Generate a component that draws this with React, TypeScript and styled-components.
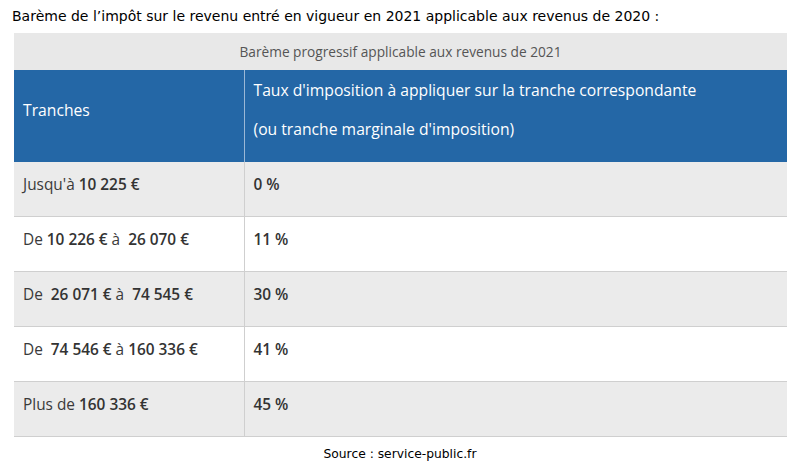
import React from "react";
import styled, { createGlobalStyle } from "styled-components";

const Global = createGlobalStyle`
  html, body { margin: 0; padding: 0; background: #ffffff; }
  body { width: 806px; height: 462px; overflow: hidden; }
`;

const Page = styled.div`
  padding: 6px 18px 0 12px;
  font-family: "DejaVu Sans", Verdana, sans-serif;
  color: #000;
`;

const Intro = styled.p`
  margin: 0;
  font-size: 14px;
  line-height: 20px;
`;

const Table = styled.table`
  margin: 7px 0 0 2px;
  width: 773px;
  table-layout: fixed;
  border-collapse: collapse;
  font-family: "Open Sans", sans-serif;
  color: #3a3a3a;
`;

const Col = styled.col<{ $w?: number }>`
  width: ${(p) => (p.$w ? `${p.$w}px` : "auto")};
`;

const Caption = styled.caption`
  background: #e8e8e8;
  color: #555;
  font-size: 13.7px;
  height: 37px;
  line-height: 37px;
`;

const HeadCell = styled.th`
  background: #2467a6;
  color: #fff;
  font-weight: 400;
  text-align: left;
  font-size: 15.7px;
  padding: 0 9px 12px;
  height: 80px;
  vertical-align: middle;
  & + & { border-left: 1px solid #9bb8d6; }
`;

const HeadLine = styled.div`
  line-height: 39px;
  white-space: nowrap;
`;

const Row = styled.tr<{ $shade: boolean }>`
  background: ${(p) => (p.$shade ? "#ebebeb" : "#ffffff")};
  border-bottom: 1px solid #cfcfcf;
`;

const Cell = styled.td`
  height: 45px;
  padding: 0 9px 9px;
  font-size: 15.4px;
  vertical-align: middle;
  white-space: nowrap;
  & + & { border-left: 1px solid #cfcfcf; }
  b { font-weight: 600; color: #333; }
`;

const Source = styled.p`
  margin: 7px 0 0;
  text-align: center;
  font-size: 12.3px;
  line-height: 20px;
`;

const rows: { label: React.ReactNode; rate: string }[] = [
  { label: <>Jusqu'à <b>10 225 €</b></>, rate: "0 %" },
  { label: <>De <b>10 226 €</b> à&nbsp; <b>26 070 €</b></>, rate: "11 %" },
  { label: <>De&nbsp; <b>26 071 €</b> à&nbsp; <b>74 545 €</b></>, rate: "30 %" },
  { label: <>De&nbsp; <b>74 546 €</b> à <b>160 336 €</b></>, rate: "41 %" },
  { label: <>Plus de <b>160 336 €</b></>, rate: "45 %" },
];

export default function App() {
  return (
    <>
      <Global />
      <Page>
        <Intro>
          Barème de l’impôt sur le revenu entré en vigueur en 2021 applicable aux revenus de 2020 :
        </Intro>
        <Table>
          <Caption>Barème progressif applicable aux revenus de 2021</Caption>
          <colgroup>
            <Col $w={230} />
            <Col />
          </colgroup>
          <thead>
            <tr>
              <HeadCell>Tranches</HeadCell>
              <HeadCell>
                <HeadLine>Taux d'imposition à appliquer sur la tranche correspondante</HeadLine>
                <HeadLine>(ou tranche marginale d'imposition)</HeadLine>
              </HeadCell>
            </tr>
          </thead>
          <tbody>
            {rows.map((r, i) => (
              <Row key={i} $shade={i % 2 === 0}>
                <Cell>{r.label}</Cell>
                <Cell><b>{r.rate}</b></Cell>
              </Row>
            ))}
          </tbody>
        </Table>
        <Source>Source : service-public.fr</Source>
      </Page>
    </>
  );
}
